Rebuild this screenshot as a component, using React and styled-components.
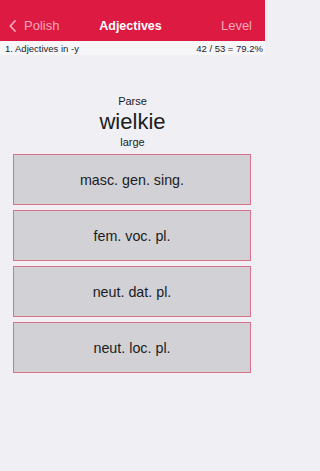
import React from "react";
import styled, { createGlobalStyle } from "styled-components";

const GlobalStyle = createGlobalStyle`
  html, body {
    margin: 0;
    padding: 0;
    background: #efeff4;
  }
  body {
    font-family: "Liberation Sans", Arial, sans-serif;
    color: #1c1c1e;
  }
`

const Screen = styled.div`
  width: 265px;
  min-height: 471px;
  background: #efeff4;
`

const NavBar = styled.div`
  height: 41px;
  background: #dd1a42;
  display: grid;
  grid-template-columns: 1fr auto 1fr;
  align-items: end;
  padding: 0 13px 8px 9px;
  box-sizing: border-box;
`

const BackButton = styled.div`
  display: flex;
  align-items: center;
  gap: 8px;
  color: #f7a9bb;
  font-size: 13px;
  line-height: 14px;
`

const NavTitle = styled.div`
  color: #fff;
  font-weight: bold;
  font-size: 12.5px;
  line-height: 14px;
`

const NavAction = styled.div`
  justify-self: end;
  color: #f7a9bb;
  font-size: 13px;
  line-height: 14px;
`

const InfoBar = styled.div`
  height: 14px;
  background: #f6f6f8;
  display: flex;
  justify-content: space-between;
  align-items: center;
  padding: 0 2px 0 5px;
  font-size: 9.5px;
`

const Prompt = styled.div`
  margin-top: 39px;
  text-align: center;
`

const Hint = styled.div`
  font-size: 11px;
  line-height: 14px;
`

const Word = styled.div`
  font-size: 22px;
  line-height: 27px;
`

const Answers = styled.div`
  display: flex;
  flex-direction: column;
  gap: 5px;
  margin: 5px 14px 0 13px;
`

const Answer = styled.button`
  height: 51px;
  box-sizing: border-box;
  background: #d1d1d6;
  border: 1px solid #d8728d;
  font-family: inherit;
  font-size: 14.3px;
  color: #1c1c1e;
  padding: 0;
  cursor: pointer;
`

const answers = ["masc. gen. sing.", "fem. voc. pl.", "neut. dat. pl.", "neut. loc. pl."];

function App() {
  return (
    <>
      <GlobalStyle />
      <Screen>
        <NavBar>
          <BackButton>
            <svg width="7" height="12" viewBox="0 0 7 12">
              <path d="M6 1 L1.3 6 L6 11" fill="none" stroke="#f7a9bb" strokeWidth="1.8" strokeLinecap="round" strokeLinejoin="round" />
            </svg>
            Polish
          </BackButton>
          <NavTitle>Adjectives</NavTitle>
          <NavAction>Level</NavAction>
        </NavBar>
        <InfoBar>
          <span>1. Adjectives in -y</span>
          <span>42 / 53 = 79.2%</span>
        </InfoBar>
        <Prompt>
          <Hint>Parse</Hint>
          <Word>wielkie</Word>
          <Hint>large</Hint>
        </Prompt>
        <Answers>
          {answers.map((a) => (
            <Answer key={a}>{a}</Answer>
          ))}
        </Answers>
      </Screen>
    </>
  );
}

export default App;
